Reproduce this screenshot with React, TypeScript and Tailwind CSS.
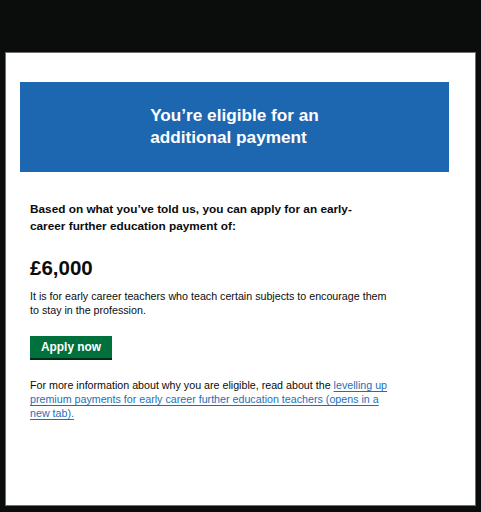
import React from 'react';

const font = { fontFamily: '"Liberation Sans", Arial, sans-serif' };

export default function App() {
  return (
    <div className="flex h-[512px] w-[481px] flex-col bg-[#0b0c0c]" style={font}>
      {/* top bar */}
      <div className="h-[52px] shrink-0" />

      {/* page body */}
      <div className="ml-[5px] mr-[5px] mb-[6px] flex-1 border border-[#6f6f6f] bg-white px-[14px] pt-[29px] text-[#0b0c0c]">
        <div className="w-[429px] bg-[#1d67b0] py-[22px] text-center">
          <h1 className="inline-block text-left text-[17.2px] font-bold leading-[22px] text-white">
            You’re eligible for an
            <br />
            additional payment
          </h1>
        </div>

        <div className="pl-[10px]">
          <h2 className="mt-[29px] text-[11.8px] font-bold leading-[17px]">
            Based on what you’ve told us, you can apply for an early-
            <br />
            career further education payment of:
          </h2>

          <p className="mt-[20px] text-[20.5px] font-bold leading-[25px]">£6,000</p>

          <p className="mt-[10px] text-[10.7px] leading-[13.7px]">
            It is for early career teachers who teach certain subjects to encourage them
            <br />
            to stay in the profession.
          </p>

          <button className="mt-[19px] flex h-[24px] items-center border-b-2 border-[#002d18] bg-[#00703c] px-[11px] text-[11.9px] font-bold leading-[14px] text-white">
            Apply now
          </button>

          <p className="mt-[19px] text-[10.7px] leading-[13.7px]">
            For more information about why you are eligible, read about the{' '}
            <a href="#" className="text-[#1d70b8] underline underline-offset-2">
              levelling up
              <br />
              premium payments for early career further education teachers (opens in a
              <br />
              new tab).
            </a>
          </p>
        </div>
      </div>
    </div>
  );
}
